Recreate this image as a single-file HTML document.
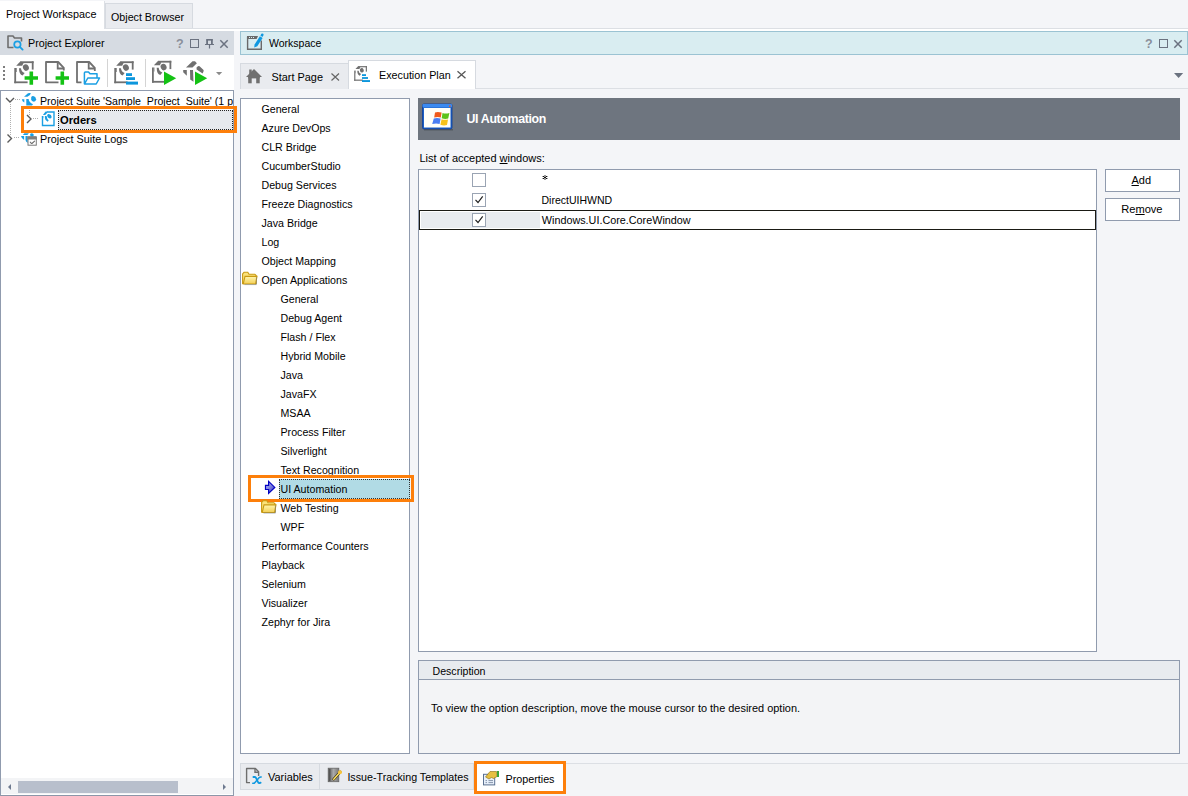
<!DOCTYPE html>
<html><head><meta charset="utf-8">
<style>
*{box-sizing:border-box;margin:0;padding:0}
html,body{width:1188px;height:796px;overflow:hidden;background:#f4f5f8;font-family:"Liberation Sans",sans-serif;color:#000}
.a{position:absolute}
.t{position:absolute;white-space:pre;font-size:10.6px;line-height:13px}
svg{position:absolute;overflow:visible}
</style></head><body>
<div class="a" style="left:0px;top:28px;width:1188px;height:1px;background:#dcdfe4"></div>
<div class="a" style="left:0px;top:29px;width:1188px;height:2px;background:#fff"></div>
<div class="a" style="left:0px;top:1px;width:105px;height:28px;background:#fff;border-right:1px solid #dcdfe4"></div>
<div class="t" style="left:6px;top:7.93px;font-size:10.8px">Project Workspace</div>
<div class="a" style="left:105px;top:3px;width:88px;height:25px;background:#e9ebef;border:1px solid #d6dae0;border-bottom:none"></div>
<div class="t" style="left:111px;top:10.96px;font-size:10.7px">Object Browser</div>
<div class="a" style="left:0px;top:31px;width:234px;height:24px;background:#d6dbe2"></div>
<div class="t" style="left:28px;top:36.95px;font-size:10.75px">Project Explorer</div>
<div class="a" style="left:0px;top:55px;width:234px;height:35px;background:#fff"></div>
<div class="a" style="left:0px;top:90px;width:234px;height:706px;background:#fff;border:1px solid #909bae;border-bottom:1px solid #8c96a8"></div>
<div class="a" style="left:1px;top:778px;width:232px;height:16px;background:#f3f4f6"></div>
<div class="a" style="left:18px;top:781px;width:160px;height:12px;background:#b8bfcc"></div>
<div class="t" style="left:40px;top:95.0px;font-size:10.6px;width:193px;overflow:hidden">Project Suite 'Sample  Project  Suite' (1 project)</div>
<div class="a" style="left:21px;top:106px;width:216px;height:27px;border:3px solid #fd7f0a"></div>
<div class="a" style="left:58px;top:110px;width:175px;height:20px;background:#e6e9ee;border:1px dotted #222"></div>
<div class="t" style="left:60px;top:113.79px;font-size:11.2px;font-weight:bold">Orders</div>
<div class="t" style="left:40px;top:132.93px;font-size:10.8px">Project Suite Logs</div>
<div class="a" style="left:240px;top:31px;width:948px;height:24px;background:#d9edf1;border:1px solid #9bc3d3"></div>
<div class="t" style="left:269px;top:37.03px;font-size:10.5px">Workspace</div>
<div class="a" style="left:240px;top:88px;width:948px;height:1px;background:#dcdfe4"></div>
<div class="a" style="left:240px;top:63px;width:109px;height:26px;background:#e9ebef;border:1px solid #d6dae0;border-bottom:none"></div>
<div class="t" style="left:271.5px;top:70.89px;font-size:10.9px">Start Page</div>
<div class="a" style="left:348px;top:60px;width:128px;height:29px;background:#fff;border:1px solid #d6dae0;border-bottom:none"></div>
<div class="t" style="left:379px;top:68.95px;font-size:10.75px">Execution Plan</div>
<div class="a" style="left:240px;top:98px;width:170px;height:656px;background:#fff;border:1px solid #909bae"></div>
<div class="t" style="left:261.5px;top:102.98px;font-size:10.65px">General</div>
<div class="t" style="left:261.5px;top:121.98px;font-size:10.65px">Azure DevOps</div>
<div class="t" style="left:261.5px;top:140.98px;font-size:10.65px">CLR Bridge</div>
<div class="t" style="left:261.5px;top:159.98px;font-size:10.65px">CucumberStudio</div>
<div class="t" style="left:261.5px;top:178.98px;font-size:10.65px">Debug Services</div>
<div class="t" style="left:261.5px;top:197.98px;font-size:10.65px">Freeze Diagnostics</div>
<div class="t" style="left:261.5px;top:216.98px;font-size:10.65px">Java Bridge</div>
<div class="t" style="left:261.5px;top:235.98px;font-size:10.65px">Log</div>
<div class="t" style="left:261.5px;top:254.98px;font-size:10.65px">Object Mapping</div>
<div class="t" style="left:261.5px;top:273.98px;font-size:10.65px">Open Applications</div>
<div class="t" style="left:280.5px;top:292.98px;font-size:10.65px">General</div>
<div class="t" style="left:280.5px;top:311.98px;font-size:10.65px">Debug Agent</div>
<div class="t" style="left:280.5px;top:330.98px;font-size:10.65px">Flash / Flex</div>
<div class="t" style="left:280.5px;top:349.98px;font-size:10.65px">Hybrid Mobile</div>
<div class="t" style="left:280.5px;top:368.98px;font-size:10.65px">Java</div>
<div class="t" style="left:280.5px;top:387.98px;font-size:10.65px">JavaFX</div>
<div class="t" style="left:280.5px;top:406.98px;font-size:10.65px">MSAA</div>
<div class="t" style="left:280.5px;top:425.98px;font-size:10.65px">Process Filter</div>
<div class="t" style="left:280.5px;top:444.98px;font-size:10.65px">Silverlight</div>
<div class="t" style="left:280.5px;top:463.98px;font-size:10.65px">Text Recognition</div>
<div class="a" style="left:279px;top:479px;width:131px;height:20px;background:#b1dbe5;border:1px dotted #333"></div>
<div class="t" style="left:280.5px;top:482.98px;font-size:10.65px">UI Automation</div>
<div class="t" style="left:280.5px;top:501.98px;font-size:10.65px">Web Testing</div>
<div class="t" style="left:280.5px;top:520.98px;font-size:10.65px">WPF</div>
<div class="t" style="left:261.5px;top:539.98px;font-size:10.65px">Performance Counters</div>
<div class="t" style="left:261.5px;top:558.98px;font-size:10.65px">Playback</div>
<div class="t" style="left:261.5px;top:577.98px;font-size:10.65px">Selenium</div>
<div class="t" style="left:261.5px;top:596.98px;font-size:10.65px">Visualizer</div>
<div class="t" style="left:261.5px;top:615.98px;font-size:10.65px">Zephyr for Jira</div>
<div class="a" style="left:248px;top:475px;width:166px;height:27px;border:3px solid #fd7f0a"></div>
<div class="a" style="left:418px;top:98px;width:762px;height:42px;background:#6e757f"></div>
<div class="t" style="left:466.5px;top:113.37px;font-size:12.4px;font-weight:bold;color:#fff;letter-spacing:-0.36px">UI Automation</div>
<div class="t" style="left:419.5px;top:151.86px;font-size:11.0px">List of accepted <u>w</u>indows:</div>
<div class="a" style="left:418px;top:169px;width:679px;height:483px;background:#fff;border:1px solid #909bae"></div>
<div class="a" style="left:419px;top:210px;width:677px;height:20px;border:1px solid #1a1a14;background:#fff"></div>
<div class="a" style="left:421px;top:212px;width:119px;height:16px;background:#e8ebef"></div>
<div class="a" style="left:472px;top:173px;width:14px;height:14px;background:#fff;border:1px solid #9aa4b3"></div>
<div class="a" style="left:472px;top:193px;width:14px;height:14px;background:#fff;border:1px solid #9aa4b3"></div>
<div class="a" style="left:472px;top:213px;width:14px;height:14px;background:#fff;border:1px solid #9aa4b3"></div>
<div class="t" style="left:541.5px;top:194.03px;font-size:10.5px">DirectUIHWND</div>
<div class="t" style="left:541.8px;top:213.93px;font-size:10.8px">Windows.UI.Core.CoreWindow</div>
<div class="a" style="left:1105px;top:169px;width:75px;height:23px;background:#fff;border:1px solid #909bae"></div>
<div class="t" style="left:1131.5px;top:173.86px;font-size:11px"><u>A</u>dd</div>
<div class="a" style="left:1105px;top:198px;width:75px;height:23px;background:#fff;border:1px solid #909bae"></div>
<div class="t" style="left:1121.2px;top:202.82px;font-size:11.1px">Re<u>m</u>ove</div>
<div class="a" style="left:418px;top:660px;width:762px;height:94px;background:#f3f4f6;border:1px solid #909bae"></div>
<div class="a" style="left:419px;top:661px;width:760px;height:19px;background:#e8ebef;border-bottom:1px solid #909bae"></div>
<div class="t" style="left:432.5px;top:665.0px;font-size:10.6px">Description</div>
<div class="t" style="left:431px;top:701.88px;font-size:10.95px">To view the option description, move the mouse cursor to the desired option.</div>
<div class="a" style="left:240px;top:763px;width:948px;height:27px;background:#f3f4f6;border-top:1px solid #dcdfe4"></div>
<div class="a" style="left:240px;top:763px;width:234px;height:27px;background:#e9ebef;border:1px solid #d6dae0"></div>
<div class="a" style="left:319px;top:764px;width:1px;height:25px;background:#d6dae0"></div>
<div class="t" style="left:268px;top:770.88px;font-size:10.95px">Variables</div>
<div class="t" style="left:347.4px;top:770.96px;font-size:10.7px">Issue-Tracking Templates</div>
<div class="a" style="left:474px;top:761px;width:92px;height:33px;background:#fff;border:3px solid #fd7f0a"></div>
<div class="t" style="left:505.5px;top:772.95px;font-size:10.75px">Properties</div>
<svg width="1188" height="796" viewBox="0 0 1188 796" style="left:0;top:0;pointer-events:none">
<defs>
<linearGradient id="gArrow" x1="0" y1="0" x2="1" y2="1"><stop offset="0" stop-color="#c4c8f4"/><stop offset="1" stop-color="#3030c8"/></linearGradient>
<linearGradient id="gFold" x1="0" y1="0" x2="0" y2="1"><stop offset="0" stop-color="#fff6b0"/><stop offset="1" stop-color="#f3cf55"/></linearGradient>
<linearGradient id="gBook" x1="0" y1="0" x2="1" y2="0"><stop offset="0" stop-color="#555"/><stop offset="0.5" stop-color="#aaa"/><stop offset="1" stop-color="#777"/></linearGradient>
</defs>
<!-- PE header icon: folder + magnifier -->
<path d="M8 38.5 V36 H13 L14.5 38 H21.5 V41.5 M8 37 V47.5 H13.5" fill="none" stroke="#6e6e6e" stroke-width="1.6" stroke-linejoin="round"/>
<circle cx="17.4" cy="44.5" r="3.2" fill="none" stroke="#1a9fe3" stroke-width="1.7"/>
<path d="M19.8 46.9 L22.6 49.6" stroke="#1a9fe3" stroke-width="1.9" stroke-linecap="round"/>
<!-- PE header buttons -->
<text x="176" y="48" font-family="Liberation Sans" font-size="12.5" font-weight="bold" fill="#8a8f9a">?</text>
<rect x="190.5" y="39.5" width="8" height="8" fill="none" stroke="#6b7280" stroke-width="1"/>
<path d="M207 39.5 H212 V44 M207 39.5 V44 M205 44.5 H214 M209.5 44.5 V48.5" fill="none" stroke="#6b7280" stroke-width="1.2"/>
<rect x="206.5" y="39" width="6" height="1.6" fill="#6b7280"/><rect x="206.5" y="39" width="1.5" height="5" fill="#6b7280"/><rect x="211" y="39" width="1.5" height="5" fill="#6b7280"/>
<path d="M220.3 40.3 L227.7 47.7 M227.7 40.3 L220.3 47.7" stroke="#6b7280" stroke-width="1.5"/>
<!-- toolbar grip -->
<g fill="#7d7d7d"><rect x="3" y="66" width="2" height="2"/><rect x="3" y="70" width="2" height="2"/><rect x="3" y="74" width="2" height="2"/><rect x="3" y="78" width="2" height="2"/></g>
<!-- toolbar separators -->
<rect x="107" y="59" width="1" height="28" fill="#d4d4d4"/>
<rect x="145" y="59" width="1" height="28" fill="#d4d4d4"/>
<!-- icon1: suite doc + plus -->
<g id="tcdoc" fill="#707070">
<rect x="14.3" y="68" width="1.8" height="15.2"/><rect x="16" y="68" width="0.7" height="4"/>
<rect x="14.3" y="81.4" width="13.3" height="1.8"/>
<rect x="31.8" y="61.3" width="1.8" height="8.3"/>
<rect x="20.5" y="61.3" width="13.1" height="1.8"/>
<path d="M16.2 65.7 L20.5 61.3 L23.6 62.9 L22.2 65.7 Z"/>
<ellipse cx="25.9" cy="67.6" rx="2.9" ry="3.3" transform="rotate(-25 25.9 67.6)"/>
<path d="M19 68.2 H21 Q21.2 71.6 24.7 73.1 L22.6 75.6 Q19 74.5 19 68.2 Z"/>
</g>
<path d="M24.6 78 H38 M31.3 71.6 V84.8" stroke="#14c214" stroke-width="3.6"/>
<!-- icon2: new doc + plus -->
<path d="M58.5 82.3 H46 V62 H58.2 L63.8 67.8 V70.5" fill="none" stroke="#707070" stroke-width="1.8" stroke-linejoin="round"/>
<path d="M57.7 62 V68.5 H63.8" fill="none" stroke="#707070" stroke-width="1.8"/>
<path d="M55.6 78 H69 M62.3 71.6 V84.8" stroke="#14c214" stroke-width="3.6"/>
<!-- icon3: doc + folder -->
<path d="M81.5 82.3 H77 V62 H89.2 L94.8 67.8 V71" fill="none" stroke="#707070" stroke-width="1.8" stroke-linejoin="round"/>
<path d="M88.7 62 V68.5 H94.8" fill="none" stroke="#707070" stroke-width="1.8"/>
<path d="M84.4 84 V73 Q84.4 72 85.4 72 H88.5 L90 73.8 H97 V77.5 M84.5 84 L87.8 78 H99.5 L96.2 84 Z" fill="none" stroke="#1a9fe3" stroke-width="1.5" stroke-linejoin="round"/>
<!-- icon4: suite doc + lines -->
<use href="#tcdoc" x="100" y="0"/>
<rect x="126" y="73.2" width="6" height="2.8" fill="#0d96dc"/>
<rect x="126" y="77.2" width="9" height="2.8" fill="#0d96dc"/>
<rect x="126" y="81.6" width="12" height="3" fill="#0d96dc"/>
<!-- icon5: suite doc + play -->
<use href="#tcdoc" x="137.7" y="-0.5"/>
<path d="M164 71.4 L176.2 78.2 L164 85 Z" fill="#14c214"/>
<!-- icon6: TC logo + play -->
<path d="M186 67.6 L192.5 61.2 H195 L196.9 63.3 L192.5 67.6 Z" fill="#707070"/>
<path d="M183.2 70.1 H186.8 V75.7 L183.2 72.3 Z" fill="#707070"/>
<path d="M190 70.1 H193 L193.5 81.8 L190.2 79.5 Z" fill="#707070"/>
<path d="M196.6 68.6 Q196.2 67.8 197 67 L198 66.2 Q198.9 65.7 199.6 66.3 L203.3 69.8 Q204 70.6 203.5 71.5 L202.6 73.4 L196.6 69.6 Z" fill="#707070"/>
<path d="M195 71.4 L207.2 78.2 L195 85 Z" fill="#14c214"/>
<!-- toolbar dropdown -->
<path d="M216 72 H222.2 L219.1 75.2 Z" fill="#8a8a8a"/>
<!-- tree: chevrons & dotted lines -->
<path d="M6 98 L10 102 L14 98" fill="none" stroke="#5a5a5a" stroke-width="1.4"/>
<path d="M27 115 L31 119 L27 123" fill="none" stroke="#5a5a5a" stroke-width="1.4"/>
<path d="M7.5 134.5 L11.5 138.5 L7.5 142.5" fill="none" stroke="#5a5a5a" stroke-width="1.4"/>
<g fill="#b0b0b0"><rect x="10" y="104" width="1" height="1"/><rect x="10" y="106" width="1" height="1"/><rect x="10" y="108" width="1" height="1"/><rect x="10" y="110" width="1" height="1"/><rect x="10" y="112" width="1" height="1"/><rect x="10" y="114" width="1" height="1"/><rect x="10" y="116" width="1" height="1"/><rect x="10" y="118" width="1" height="1"/><rect x="10" y="120" width="1" height="1"/><rect x="10" y="122" width="1" height="1"/><rect x="10" y="124" width="1" height="1"/><rect x="10" y="126" width="1" height="1"/><rect x="10" y="128" width="1" height="1"/><rect x="10" y="130" width="1" height="1"/><rect x="10" y="132" width="1" height="1"/><rect x="10" y="134" width="1" height="1"/><rect x="15" y="99" width="1" height="1"/><rect x="17" y="99" width="1" height="1"/><rect x="19" y="99" width="1" height="1"/><rect x="33" y="118" width="1" height="1"/><rect x="35" y="118" width="1" height="1"/><rect x="37" y="118" width="1" height="1"/><rect x="29" y="110" width="1" height="1"/><rect x="29" y="112" width="1" height="1"/><rect x="29" y="114" width="1" height="1"/><rect x="14" y="137" width="1" height="1"/><rect x="16" y="137" width="1" height="1"/><rect x="18" y="137" width="1" height="1"/></g>
<!-- tree TC logo blue -->
<g fill="#1a9fe3">
<path d="M24 96.8 L28 93.3 Q29.5 92.8 30.8 93.1 L30 95 L27.3 96.8 Z"/>
<path d="M31.2 97.4 Q31.6 95.9 33.2 96 Q35.9 96.6 36.1 99.2 Q36 101.6 33.8 101.8 Q31.4 101.2 31.2 99.4 Z"/>
<path d="M21.8 99.3 H24.3 V102.6 Q22.2 101.4 21.8 99.3 Z"/>
<path d="M26.3 99 H28.6 Q29 102.6 33 104.2 L32 105.6 H26.3 Z"/>
</g>
<!-- Orders doc icon -->
<path d="M42.5 116 V125.5 H54 V112 H47" fill="none" stroke="#1a9fe3" stroke-width="1.4"/>
<path d="M41.8 116.1 H43.3 V118.2 Q42 117.6 41.8 116.1 Z" fill="#1a9fe3"/>
<path d="M42.9 114.9 L45.6 111.6 H47.6 L46.6 113.6 L45.2 114.9 Z" fill="#1a9fe3"/>
<path d="M47.2 115.2 Q47.6 114 48.8 114.1 Q51.6 114.6 51.7 117 Q51.4 118.6 49.8 118.6 Q47.4 117.8 47.2 116 Z" fill="#1a9fe3"/>
<path d="M44.9 116.1 H46.6 Q46.9 119 48.7 120.3 L47.8 121.7 Q44.9 120.4 44.9 118 Z" fill="#1a9fe3"/>
<!-- Logs: TC logo partial + calendar -->
<g fill="#1a9fe3">
<path d="M22.9 134.9 L24.4 133.2 H28.9 L27.4 134.9 Z"/>
<ellipse cx="31.9" cy="135" rx="1.9" ry="1.6" transform="rotate(30 31.9 135)"/>
<path d="M21 135.9 H24.1 V140 Q21.6 138.6 21 135.9 Z"/>
<path d="M25.5 136.1 H27.7 V142.9 Q25.5 141.6 25.5 140 Z"/>
</g>
<rect x="28" y="137" width="8.3" height="8.2" fill="#fff" stroke="#7a7a7a" stroke-width="1"/>
<path d="M27.5 139.6 V137.6 Q27.5 136.3 28.8 136.3 H35.6 Q36.8 136.3 36.8 137.6 V139.6 Z" fill="#7f7f7f"/>
<path d="M30.3 142.2 Q31.4 143.8 32.2 143.2 L34.6 141.2" fill="none" stroke="#6a6a6a" stroke-width="1.1" stroke-linecap="round"/>
<!-- left scrollbar arrows -->
<path d="M8 787 L11 784 V790 Z" fill="#6e7a90"/>
<path d="M226 787 L223 784 V790 Z" fill="#6e7a90"/>
<!-- Workspace header icon -->
<path d="M247.6 36.8 V49.2 H261.3 V40.6" fill="none" stroke="#6a6a6a" stroke-width="1.4"/>
<path d="M247 36 H258 L256.6 39 H247 Z" fill="#6a6a6a"/>
<g fill="#d9edf1"><rect x="249" y="37" width="1" height="1"/><rect x="251" y="37" width="1" height="1"/><rect x="253" y="37" width="1" height="1"/></g>
<path d="M254.2 47.6 L254.6 44.6 L259.9 36.2 L262.6 37.9 L257.3 46.3 Z" fill="#0f98e0"/>
<path d="M260.4 35.4 L261.4 33.8 Q262.2 33.1 263.2 33.8 Q263.9 34.6 263.4 35.4 L262.4 37 Z" fill="#0f98e0"/>
<!-- Workspace header buttons -->
<text x="1145" y="48" font-family="Liberation Sans" font-size="12.5" font-weight="bold" fill="#8a8f9a">?</text>
<rect x="1159.5" y="39.5" width="8" height="8" fill="none" stroke="#6b7280" stroke-width="1"/>
<path d="M1174.3 40.3 L1181.7 47.7 M1181.7 40.3 L1174.3 47.7" stroke="#6b7280" stroke-width="1.5"/>
<!-- home icon -->
<path d="M246 77 L254 69 L262 77 Z" fill="#707070"/>
<rect x="249.2" y="69.5" width="2.5" height="4.5" fill="#707070"/>
<rect x="248.2" y="76" width="11.5" height="2.4" fill="#707070"/>
<rect x="248.2" y="77" width="3.5" height="6.3" fill="#707070"/>
<rect x="256.2" y="77" width="3.5" height="6.3" fill="#707070"/>
<!-- tab close X -->
<path d="M331.5 73.5 L339 80.5 M339 73.5 L331.5 80.5" stroke="#666" stroke-width="1.2"/>
<path d="M457.5 71.2 L465.5 78.2 M465.5 71.2 L457.5 78.2" stroke="#555" stroke-width="1.25"/>
<!-- exec plan icon -->
<use href="#tcdoc" transform="translate(354.2 66.1) scale(0.66 0.67) translate(-14.3 -61.3)"/>
<rect x="362" y="74.2" width="4" height="1.8" fill="#0d96dc"/>
<rect x="362" y="77.1" width="6" height="1.8" fill="#0d96dc"/>
<rect x="362" y="80.1" width="8" height="1.9" fill="#0d96dc"/>
<!-- tabs dropdown -->
<path d="M1174 73 H1183.2 L1178.6 78 Z" fill="#6b7280"/>
<!-- folder icons -->
<g id="fold">
<path d="M242.6 283.5 V274 L244 272.3 H247.8 L249 274.2 H254.8 L256.2 275.6 V283.5 Z" fill="#fbe27a" stroke="#c99a12" stroke-width="1.1"/>
<path d="M243.2 284 L245 276.4 H257 L255.6 284 Z" fill="url(#gFold)" stroke="#c99a12" stroke-width="1.1"/>
<path d="M256.4 277 V284.6 H244.5" fill="none" stroke="#6f7b90" stroke-opacity="0.5" stroke-width="1"/>
</g>
<use href="#fold" x="19" y="228.5"/>
<!-- UI automation arrow -->
<path d="M265.5 485.3 H268.6 V481.4 L274.8 487.4 L268.6 493.4 V489.5 H265.5 Z" fill="url(#gArrow)" stroke="#0000c0" stroke-width="1.2" stroke-linejoin="miter"/>
<!-- Windows icon in header -->
<rect x="422.5" y="104" width="29.5" height="25" rx="1.5" fill="#1d5fc4" stroke="#0b3d99" stroke-width="0.8"/>
<rect x="422.5" y="104" width="29.5" height="3.5" rx="1" fill="#3b8af0"/>
<rect x="424" y="108" width="26.5" height="19.5" fill="#fffff8"/>
<rect x="449" y="105.5" width="1.6" height="1.3" fill="#e85a20"/>
<rect x="424" y="129.2" width="29" height="1.2" fill="#3a3f46" opacity="0.6"/>
<path d="M435 112.4 Q438 111.5 441.6 112.6 L440.8 117.5 Q437.5 116.6 434.2 117.6 Z" fill="#f05a1a"/>
<path d="M442.5 113 Q445.5 114 449.4 113 L448.2 118.5 Q445 119.4 441.7 118.2 Z" fill="#5cc31a"/>
<path d="M433.8 118.4 Q437.2 117.5 440.6 118.5 L439.6 124 Q436.2 123 432.2 124 Z" fill="#4a7ef2"/>
<path d="M441.6 119.2 Q444.8 120.2 448 119.4 L447 125 Q443.8 126 440.4 124.8 Z" fill="#f7c21a"/>
<!-- asterisk -->
<rect x="544" y="175" width="2" height="5" fill="#000" opacity="0.4"/><g fill="#000" opacity="0.35"><rect x="542" y="176" width="1" height="1"/><rect x="547" y="176" width="1" height="1"/><rect x="542" y="178" width="1" height="1"/><rect x="547" y="178" width="1" height="1"/></g>
<g fill="#111"><rect x="543" y="176" width="1" height="1"/><rect x="546" y="176" width="1" height="1"/><rect x="544" y="177" width="2" height="1"/><rect x="543" y="178" width="1" height="1"/><rect x="546" y="178" width="1" height="1"/></g>
<!-- checkmarks -->
<path d="M475.5 199.8 L478 202.5 L482.7 196.3" fill="none" stroke="#222" stroke-width="1.2"/>
<path d="M475.5 219.8 L478 222.5 L482.7 216.3" fill="none" stroke="#222" stroke-width="1.2"/>
<!-- variables icon -->
<path d="M250 782.6 H246.6 V768.5 H255.4 L258.6 771.8 V776" fill="none" stroke="#6e6e6e" stroke-width="1.4" stroke-linejoin="round"/>
<path d="M255 768.5 V772.2 H258.6" fill="none" stroke="#6e6e6e" stroke-width="1.4"/>
<path d="M253.4 777 H255 Q255.6 777 256 778 L258.4 782.8 Q258.9 783.6 260.6 782.6" fill="none" stroke="#0f98e0" stroke-width="1.8" stroke-linecap="round"/>
<path d="M261.2 777 Q260 776.8 259 777.8 L255 782.4 Q254 783.6 252.8 783.2" fill="none" stroke="#0f98e0" stroke-width="1.5" stroke-linecap="round"/>
<!-- issue tracking icon -->
<rect x="328.2" y="768.2" width="10.6" height="13.5" fill="url(#gBook)" stroke="#666" stroke-width="0.8"/>
<rect x="329" y="769" width="1.4" height="12" fill="#555"/>
<path d="M333.7 779.2 L340.2 772" stroke="#3a2a00" stroke-width="2.6" stroke-linecap="round"/>
<path d="M333.7 779.2 L340.2 772" stroke="#ffe66a" stroke-width="1.4" stroke-linecap="round"/>
<circle cx="340" cy="772.2" r="2" fill="#f7c53a"/>
<!-- properties icon -->
<rect x="483.5" y="774.3" width="11.2" height="10.6" fill="#e8f0fb" stroke="#5a7090" stroke-width="1"/>
<path d="M485.5 780.6 H487 M488.5 780.6 H493 M485.5 782.6 H487 M488.5 782.6 H493" stroke="#7a8aa0" stroke-width="0.9"/>
<path d="M485.5 777 L490 771.5 H496.5 L497 776.5 L493.5 778.5 L491.5 777.5 L489 779 Z" fill="#e7c042" stroke="#8a6d10" stroke-width="0.6"/>
<rect x="497" y="771" width="2" height="6" fill="#3aa53a"/>
</svg>
</body></html>
